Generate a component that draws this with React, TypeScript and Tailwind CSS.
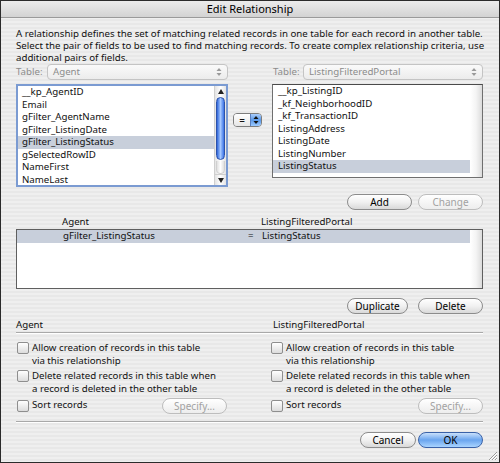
import React from "react";

const leftFields = [
  "__kp_AgentID",
  "Email",
  "gFilter_AgentName",
  "gFilter_ListingDate",
  "gFilter_ListingStatus",
  "gSelectedRowID",
  "NameFirst",
  "NameLast",
];

const rightFields = [
  "__kp_ListingID",
  "_kf_NeighborhoodID",
  "_kf_TransactionID",
  "ListingAddress",
  "ListingDate",
  "ListingNumber",
  "ListingStatus",
];

function UpDown({ color = "#8a8a8a" }: { color?: string }) {
  return (
    <svg width="6" height="10" viewBox="0 0 6 10">
      <path d="M3 1 L5.5 4 L0.5 4 Z" fill={color} />
      <path d="M3 9 L5.5 6 L0.5 6 Z" fill={color} />
    </svg>
  );
}

function TableSelect({ value }: { value: string }) {
  return (
    <div className="flex-1 h-[16px] flex items-center justify-between rounded-[4px] border border-[#c4c4c4] bg-gradient-to-b from-[#fafafa] to-[#ececec] pl-[5px] pr-[5px] text-[#8c8c8c]">
      <span>{value}</span>
      <UpDown color="#9a9a9a" />
    </div>
  );
}

function AquaButton({
  label,
  width,
  disabled,
  primary,
}: {
  label: string;
  width: string;
  disabled?: boolean;
  primary?: boolean;
}) {
  const base =
    "h-[16px] flex items-center justify-center rounded-full border text-[10px] leading-none";
  if (primary) {
    return (
      <div
        className={`${base} ${width} border-[#3a62a8] bg-gradient-to-b from-[#c9e0fb] via-[#6aa5ee] to-[#a9d4ff] text-black`}
      >
        {label}
      </div>
    );
  }
  return (
    <div
      className={`${base} ${width} ${
        disabled
          ? "border-[#bdbdbd] text-[#a2a2a2] bg-gradient-to-b from-white to-[#ededed]"
          : "border-[#8c8c8c] text-black bg-gradient-to-b from-white via-[#f1f1f1] to-[#d9d9d9]"
      }`}
    >
      {label}
    </div>
  );
}

function Checkbox() {
  return (
    <div className="w-[12px] h-[12px] shrink-0 rounded-[2px] border border-[#8e8e8e] bg-gradient-to-b from-white to-[#dcdcdc]" />
  );
}

function OptionsColumn({
  title,
  titlePad,
  boxPad,
  sortPad,
}: {
  title: string;
  titlePad: string;
  boxPad: string;
  sortPad: string;
}) {
  return (
    <div className="flex flex-col">
      <div className={`h-[12px] leading-[12px] mt-[5px] ${titlePad}`}>{title}</div>
      <div className="mt-[1px] h-[2px] bg-[#a9a9a9] border-b border-white" />
      <div className={`flex flex-col ${boxPad}`}>
        <div className="mt-[8px] flex gap-[3px]">
          <Checkbox />
          <div className="leading-[13px] -mt-[1px]">
            Allow creation of records in this table
            <br />
            via this relationship
          </div>
        </div>
        <div className="mt-[3px] flex gap-[3px]">
          <Checkbox />
          <div className="leading-[13px] -mt-[1px]">
            Delete related records in this table when
            <br />
            a record is deleted in the other table
          </div>
        </div>
        <div className={`mt-[2px] h-[17px] flex items-center ${sortPad}`}>
          <Checkbox />
          <span className="ml-[3px]">Sort records</span>
          <div className="ml-auto">
            <AquaButton label="Specify..." width="w-[65px]" disabled />
          </div>
        </div>
      </div>
      <div className="mt-[7px] h-[2px] bg-[#a9a9a9] border-b border-white" />
    </div>
  );
}

export default function App() {
  return (
    <div className="w-[500px] h-[463px] overflow-hidden border border-[#2b2b2b] flex flex-col font-['Lucida_Grande','Noto_Sans',sans-serif] text-[9.7px] text-[#111] bg-[repeating-linear-gradient(180deg,#efefef_0px,#efefef_2px,#e8e8e8_2px,#e8e8e8_4px)]">
      <div className="h-[17px] shrink-0 flex items-center justify-center border-b border-[#9a9a9a] bg-gradient-to-b from-[#ececec] to-[#d3d3d3] text-[11px] text-black">
        Edit Relationship
      </div>

      <div className="flex-1 flex flex-col pl-[15px] pr-[16px] relative">
        <p className="mt-[10px] leading-[12px] whitespace-nowrap">
          A relationship defines the set of matching related records in one table for each record in another table.
          <br />
          Select the pair of fields to be used to find matching records. To create complex relationship criteria, use
          <br />
          additional pairs of fields.
        </p>

        <div className="h-[16px] flex items-center">
          <div className="w-[212px] flex items-center">
            <span className="text-[#8c8c8c] w-[31px]">Table:</span>
            <TableSelect value="Agent" />
          </div>
          <div className="ml-auto w-[211px] flex items-center">
            <span className="text-[#8c8c8c] pl-[1px] w-[31px]">Table:</span>
            <TableSelect value="ListingFilteredPortal" />
          </div>
        </div>

        <div className="mt-[4px] flex items-start">
          <div className="w-[212px] h-[103px] flex border-2 border-[#7b9bd2] bg-white">
            <div className="flex-1 flex flex-col">
              {leftFields.map((f, i) => (
                <div
                  key={f}
                  className={`h-[12.5px] leading-[12.5px] pl-[4px] ${i === 4 ? "bg-[#c8cfdb]" : ""}`}
                >
                  {f}
                </div>
              ))}
            </div>
            <div className="w-[12px] flex flex-col border-l border-[#cfcfcf] bg-gradient-to-r from-[#e4e4e4] via-white to-[#e4e4e4]">
              <div className="h-[11px] flex items-center justify-center">
                <svg width="6" height="5" viewBox="0 0 6 5">
                  <path d="M3 0 L6 5 L0 5 Z" fill="#222" />
                </svg>
              </div>
              <div className="h-[63px] mx-[1px] rounded-full border border-[#2c52aa] bg-gradient-to-r from-[#2f63d8] via-[#a6c8ff] to-[#3a70e4]" />
              <div className="flex-1 mx-[1px] mt-[1px] rounded-b-full border border-[#d0d0d0] border-t-0 bg-gradient-to-r from-[#e0e0e0] via-white to-[#e0e0e0]" />
              <div className="h-[11px] flex items-center justify-center border-t border-[#cfcfcf]">
                <svg width="6" height="5" viewBox="0 0 6 5">
                  <path d="M3 5 L6 0 L0 0 Z" fill="#222" />
                </svg>
              </div>
            </div>
          </div>

          <div className="ml-[5px] mt-[29px] w-[29px] h-[14px] flex rounded-[4px] border border-[#7d7d7d] overflow-hidden">
            <div className="flex-1 flex items-center justify-center bg-gradient-to-b from-white to-[#e6e6e6] text-[10px] leading-none">
              =
            </div>
            <div className="w-[11px] flex items-center justify-center bg-gradient-to-b from-[#a9cdfb] via-[#5b9ae9] to-[#9ccaff] border-l border-[#5a7fbf]">
              <UpDown color="#111" />
            </div>
          </div>

          <div className="ml-auto w-[211px] h-[94px] flex border border-[#6f6f6f] border-t-[#4a4a4a] bg-white">
            <div className="flex-1 flex flex-col">
              {rightFields.map((f, i) => (
                <div
                  key={f}
                  className={`h-[12.5px] leading-[12.5px] pl-[5px] ${i === 6 ? "bg-[#c8cfdb]" : ""}`}
                >
                  {f}
                </div>
              ))}
            </div>
            <div className="w-[12px] bg-gradient-to-r from-white via-[#f4f4f4] to-[#dcdcdc]" />
          </div>
        </div>

        <div className="mt-[7px] flex justify-end gap-[6px]">
          <AquaButton label="Add" width="w-[65px]" />
          <AquaButton label="Change" width="w-[65px]" disabled />
        </div>

        <div className="mt-[6px] h-[12px] leading-[12px] flex">
          <span className="pl-[46px] w-[245px]">Agent</span>
          <span>ListingFilteredPortal</span>
        </div>

        <div className="mt-[1px] h-[60px] flex border border-[#5f5f5f] bg-white">
          <div className="flex-1">
            <div className="h-[12.5px] leading-[12.5px] flex bg-[#c8cfdb]">
              <span className="pl-[46px] w-[231px]">gFilter_ListingStatus</span>
              <span className="w-[14px]">=</span>
              <span>ListingStatus</span>
            </div>
          </div>
          <div className="w-[12px] bg-gradient-to-r from-white via-[#f4f4f4] to-[#dcdcdc]" />
        </div>

        <div className="mt-[9px] flex justify-end gap-[10px]">
          <AquaButton label="Duplicate" width="w-[61px]" />
          <AquaButton label="Delete" width="w-[65px]" />
        </div>

        <div className="grid grid-cols-[235px_1fr]">
          <OptionsColumn title="Agent" titlePad="pl-0" boxPad="pl-[1px]" sortPad="pr-[24px]" />
          <OptionsColumn title="ListingFilteredPortal" titlePad="pl-[22px]" boxPad="pl-[20px]" sortPad="" />
        </div>

        <div className="mt-[9px] flex justify-end gap-[2px]">
          <AquaButton label="Cancel" width="w-[56px]" />
          <AquaButton label="OK" width="w-[65px]" primary />
        </div>

        <svg className="absolute right-[1px] bottom-[1px]" width="11" height="11" viewBox="0 0 11 11">
          <path d="M10 2 L2 10 M10 5 L5 10 M10 8 L8 10" stroke="#9a9a9a" strokeWidth="1" />
          <path d="M10 3 L3 10 M10 6 L6 10 M10 9 L9 10" stroke="#ffffff" strokeWidth="1" />
        </svg>
      </div>
    </div>
  );
}
